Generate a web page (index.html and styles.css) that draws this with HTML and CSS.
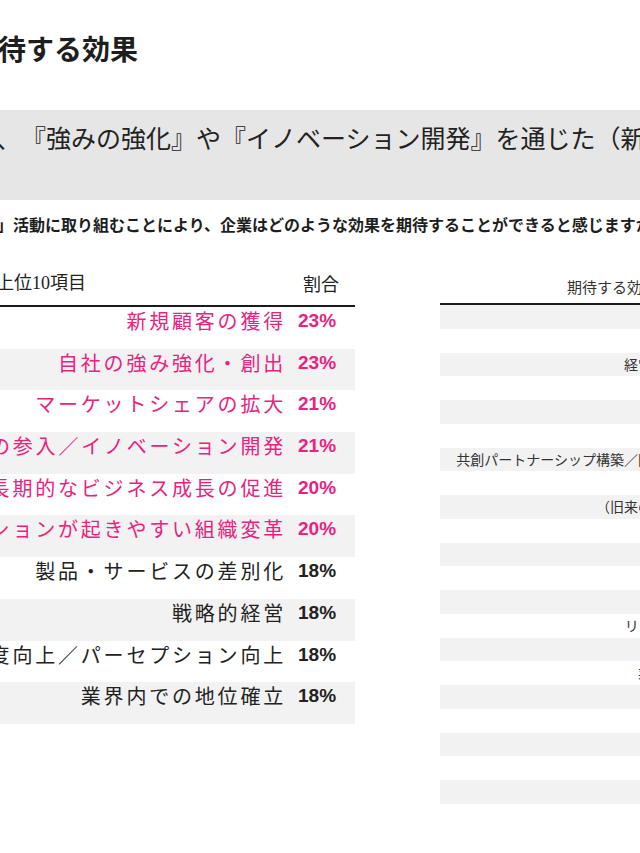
FILE: index.html
```html
<!DOCTYPE html>
<html lang="ja">
<head>
<meta charset="utf-8">
<title>期待する効果</title>
<link rel="stylesheet" href="styles.css">
</head>
<body>
<div class="page">
  <div class="slide">
    <h1 class="title">期待する効果</h1>
    <div class="lead"><p>、『強みの強化』や『イノベーション開発』を通じた（新たな価値の創出）</p></div>
    <p class="question">「共創」活動に取り組むことにより、企業はどのような効果を期待することができると感じますか。</p>
    <div class="tables">
      <div class="rank">
        <div class="rank-head">
          <span class="rh-label">回答上位10項目</span>
          <span class="rh-pct">割合</span>
        </div>
        <div class="rank-row hot"><span class="lbl">新規顧客の獲得</span><span class="pct">23%</span></div>
        <div class="rank-row hot"><span class="lbl">自社の強み強化・創出</span><span class="pct">23%</span></div>
        <div class="rank-row hot"><span class="lbl">マーケットシェアの拡大</span><span class="pct">21%</span></div>
        <div class="rank-row hot"><span class="lbl">新領域の参入／イノベーション開発</span><span class="pct">21%</span></div>
        <div class="rank-row hot"><span class="lbl">中長期的なビジネス成長の促進</span><span class="pct">20%</span></div>
        <div class="rank-row hot"><span class="lbl">イノベーションが起きやすい組織変革</span><span class="pct">20%</span></div>
        <div class="rank-row"><span class="lbl">製品・サービスの差別化</span><span class="pct">18%</span></div>
        <div class="rank-row"><span class="lbl">戦略的経営</span><span class="pct">18%</span></div>
        <div class="rank-row"><span class="lbl">認知度向上／パーセプション向上</span><span class="pct">18%</span></div>
        <div class="rank-row"><span class="lbl">業界内での地位確立</span><span class="pct">18%</span></div>
      </div>
      <div class="effects">
        <div class="eff-head">期待する効果</div>
        <div class="eff-row"></div>
        <div class="eff-row"></div>
        <div class="eff-row">経営基盤の強化</div>
        <div class="eff-row"></div>
        <div class="eff-row"></div>
        <div class="eff-row"></div>
        <div class="eff-row">共創パートナーシップ構築／関係性の強化</div>
        <div class="eff-row"></div>
        <div class="eff-row">（旧来の慣習打破）</div>
        <div class="eff-row"></div>
        <div class="eff-row"></div>
        <div class="eff-row"></div>
        <div class="eff-row"></div>
        <div class="eff-row">リソースの獲得</div>
        <div class="eff-row"></div>
        <div class="eff-row">業務の効率化</div>
        <div class="eff-row"></div>
        <div class="eff-row"></div>
        <div class="eff-row"></div>
        <div class="eff-row"></div>
        <div class="eff-row"></div>
        <div class="eff-row"></div>
      </div>
    </div>
  </div>
</div>
</body>
</html>
```
FILE: styles.css
```css
html, body {
  margin: 0;
  padding: 0;
  background: #ffffff;
}
body {
  width: 640px;
  height: 853px;
  overflow: hidden;
  font-family: "Noto Sans CJK JP", "Noto Sans", sans-serif;
  color: #222222;
  text-spacing-trim: space-all;
}
.page {
  width: 640px;
  height: 853px;
  overflow: hidden;
}
.slide {
  margin-left: -80px;
  width: 900px;
}
.title {
  margin: 0;
  padding: 30px 0 0 50px;
  font-size: 28px;
  line-height: 36px;
  font-weight: 700;
  color: #1e1e1e;
  white-space: nowrap;
}
.lead {
  margin-top: 44px;
  height: 90px;
  background: #e6e6e6;
  box-sizing: border-box;
  padding: 10px 0 0 76px;
}
.lead p {
  margin: 0;
  font-size: 25px;
  line-height: 34px;
  white-space: nowrap;
  color: #222222;
}
.question {
  margin: 13px 0 0 0;
  padding-left: 29px;
  font-size: 16px;
  line-height: 22px;
  font-weight: 700;
  white-space: nowrap;
  color: #1e1e1e;
}
.tables {
  margin-top: 35px;
  display: flex;
  gap: 85px;
  align-items: flex-start;
}
.rank {
  width: 435px;
  flex: none;
}
.rank-head {
  display: grid;
  grid-template-columns: 366px 57px;
  column-gap: 12px;
  height: 35px;
  border-bottom: 2px solid #1a1a1a;
  font-size: 18px;
  line-height: 26px;
  white-space: nowrap;
  color: #222;
}
.rh-label {
  padding-left: 40px;
  font-family: "Liberation Serif", "Noto Sans CJK JP", serif;
}
.rh-pct {
  padding-left: 5px;
}
.rank-row {
  display: grid;
  grid-template-columns: 366px 57px;
  column-gap: 12px;
  height: 41.7px;
  box-sizing: border-box;
  white-space: nowrap;
  line-height: 28px;
  color: #222222;
}
.rank-row:nth-of-type(odd) {
  background: #f2f2f2;
}
.rank-row .lbl {
  display: flex;
  justify-content: flex-end;
  font-size: 20px;
  letter-spacing: 2.8px;
  font-weight: 400;
}
.rank-row .pct {
  font-family: "Liberation Sans", Arial, sans-serif;
  font-weight: 700;
  font-size: 19px;
}
.rank-row.hot {
  color: #e8237f;
}
.effects {
  width: 300px;
  flex: none;
}
.eff-head {
  height: 35px;
  box-sizing: border-box;
  padding: 4px 0 0 127px;
  border-bottom: 2px solid #1a1a1a;
  font-size: 15px;
  line-height: 26px;
  white-space: nowrap;
  color: #333333;
}
.eff-row {
  height: 23.75px;
  line-height: 23.75px;
  padding-right: 18px;
  text-align: right;
  font-size: 14px;
  white-space: nowrap;
  color: #333333;
}
.eff-row:nth-of-type(even) {
  background: #f2f2f2;
}
```
